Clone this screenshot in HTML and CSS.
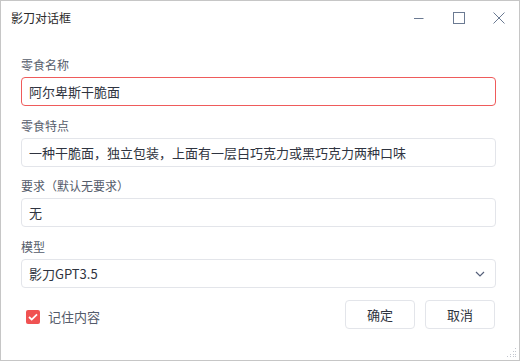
FILE: index.html
```html
<!DOCTYPE html>
<html lang="zh-CN">
<head>
  <meta charset="UTF-8" />
  <meta name="viewport" content="width=device-width, initial-scale=1.0" />
  <title>影刀对话框</title>
  <link rel="stylesheet" href="styles.css">
</head>
<body>
  <div class="window">
    <!-- 标题栏 -->
    <div class="titlebar">
      <span class="title">影刀对话框</span>
      <div class="controls">
        <button class="ctl" title="最小化">
          <svg width="12" height="12" viewBox="0 0 12 12"><path d="M1 6.5h9.5" stroke="#6b7a92" stroke-width="1" fill="none"/></svg>
        </button>
        <button class="ctl" title="最大化">
          <svg width="12" height="12" viewBox="0 0 12 12"><rect x="0.5" y="0.5" width="11" height="11" stroke="#6b7a92" stroke-width="1" fill="none"/></svg>
        </button>
        <button class="ctl" title="关闭">
          <svg width="12" height="12" viewBox="0 0 12 12"><path d="M0.5 0.5l11 11M11.5 0.5l-11 11" stroke="#6b7a92" stroke-width="1" fill="none"/></svg>
        </button>
      </div>
    </div>

    <!-- 表单 -->
    <form class="content">
      <div class="field">
        <label class="field-label">零食名称</label>
        <input class="field-input invalid" type="text" value="阿尔卑斯干脆面" />
      </div>
      <div class="field">
        <label class="field-label">零食特点</label>
        <input class="field-input" type="text" value="一种干脆面，独立包装，上面有一层白巧克力或黑巧克力两种口味" />
      </div>
      <div class="field">
        <label class="field-label">要求（默认无要求）</label>
        <input class="field-input" type="text" value="无" />
      </div>
      <div class="field">
        <label class="field-label">模型</label>
        <div class="field-input select">
          <span>影刀GPT3.5</span>
          <svg width="10" height="6" viewBox="0 0 10 6"><path d="M1 1l4 4 4-4" stroke="#56607a" stroke-width="1.2" fill="none"/></svg>
        </div>
      </div>

      <div class="footer">
        <label class="check">
          <span class="box">
            <svg width="10" height="8" viewBox="0 0 10 8"><path d="M1 4l2.7 2.6L9 1.3" stroke="#fff" stroke-width="1.8" fill="none"/></svg>
          </span>
          记住内容
        </label>
        <div class="actions">
          <button type="button" class="btn">确定</button>
          <button type="button" class="btn">取消</button>
        </div>
      </div>
    </form>

    <!-- 右下角拖动手柄 -->
    <svg class="grip" width="10" height="10" viewBox="0 0 10 10" fill="#c3c7cf">
      <rect x="8" y="0" width="1" height="1"/>
      <rect x="6" y="3" width="1" height="1"/><rect x="8" y="3" width="1" height="1"/>
      <rect x="3" y="6" width="1" height="1"/><rect x="6" y="6" width="1" height="1"/><rect x="8" y="6" width="1" height="1"/>
      <rect x="0" y="8" width="1" height="1"/><rect x="3" y="8" width="1" height="1"/><rect x="6" y="8" width="1" height="1"/><rect x="8" y="8" width="1" height="1"/>
    </svg>
  </div>
</body>
</html>
```

FILE: styles.css
```css
body {
  margin: 0;
  font-family: "Noto Sans CJK SC", "Noto Sans", sans-serif;
  background: #fff;
}

.window {
  position: relative;
  width: 520px;
  height: 361px;
  box-sizing: border-box;
  border: 1px solid #c6c6c6;
  background: #fff;
}

.titlebar {
  display: flex;
  justify-content: space-between;
  align-items: center;
  height: 34px;
}

.title {
  padding-left: 10px;
  font-size: 12px;
  color: #2b2b2b;
  line-height: 16px;
}

.controls {
  display: flex;
  height: 100%;
}

.ctl {
  width: 40px;
  height: 100%;
  border: none;
  background: none;
  padding: 0;
  display: flex;
  align-items: center;
  justify-content: center;
}

.content {
  padding: 22px 23px 0 20px;
}

.field {
  margin-bottom: 11.7px;
}

.field-label {
  display: block;
  font-size: 12px;
  line-height: 16px;
  color: #555c6b;
  margin-bottom: 4px;
}

.field-input {
  display: block;
  width: 100%;
  height: 29px;
  box-sizing: border-box;
  border: 1px solid #e3e5ea;
  border-radius: 4px;
  padding: 0 7px;
  font-family: inherit;
  font-size: 13px;
  color: #2f3440;
  background: #fff;
  outline: none;
}

.field-input.invalid {
  border-color: #ef5b5b;
}

.select {
  display: flex;
  align-items: center;
  justify-content: space-between;
  padding-right: 10px;
}

.footer {
  display: flex;
  justify-content: space-between;
  align-items: center;
  margin-top: 5px;
}

.check {
  display: flex;
  align-items: center;
  gap: 8px;
  padding-left: 5px;
  margin-top: 5px;
  font-size: 13px;
  color: #555c6b;
}

.box {
  width: 14px;
  height: 14px;
  border-radius: 2px;
  background: #f05252;
  display: flex;
  align-items: center;
  justify-content: center;
}

.actions {
  display: flex;
  gap: 10px;
  margin-right: 1px;
}

.btn {
  width: 70px;
  height: 29px;
  border: 1px solid #e3e5ea;
  border-radius: 4px;
  background: #fff;
  font-family: inherit;
  font-size: 13px;
  color: #2f3440;
  cursor: pointer;
}

.grip {
  position: absolute;
  right: 2px;
  bottom: 2px;
}
```
